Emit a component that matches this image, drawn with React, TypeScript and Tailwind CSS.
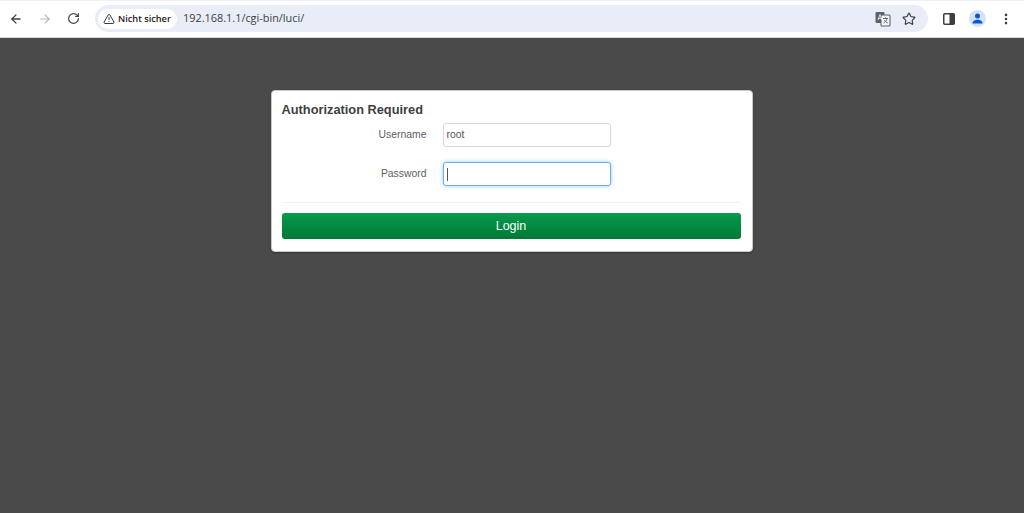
import { ArrowLeft, ArrowRight, RotateCw, TriangleAlert, Star, EllipsisVertical } from "lucide-react";

function Translate() {
  return (
    <svg width="16" height="16" viewBox="0 0 16 16">
      <rect x="0.500" y="1" width="9" height="11" rx="1" fill="#5f6368" />
      <rect x="6" y="4" width="9" height="11" rx="1" fill="#f4f5f8" stroke="#5f6368" strokeWidth="1.100" />
      <path d="M3 9l2-5.500 2 5.500M3.800 7.500h2.500" fill="none" stroke="#e9edf8" strokeWidth="0.900" />
      <path d="M8 7.500h5M10.500 6.500v1M12 7.500c-.4 2-1.700 3.500-3.500 4.500M9.300 9.300c.7 1.200 2 2.200 3.500 2.700" fill="none" stroke="#5f6368" strokeWidth="0.900" />
    </svg>
  );
}

function Panel() {
  return (
    <svg width="12" height="12" viewBox="0 0 12 12">
      <rect x="0.750" y="0.750" width="10.500" height="10.500" rx="1" fill="none" stroke="#3c4043" strokeWidth="1.500" />
      <rect x="6.500" y="0.750" width="4.750" height="10.500" fill="#3c4043" />
    </svg>
  );
}

function Avatar() {
  return (
    <div className="w-[17px] h-[17px] rounded-full bg-[#d3e3fd] flex items-center justify-center">
      <svg width="13" height="13" viewBox="0 0 13 13">
        <circle cx="6.500" cy="4" r="2.500" fill="#0b57d0" />
        <path d="M1.500 11.500c0-2.500 2.500-3.700 5-3.700s5 1.200 5 3.700z" fill="#0b57d0" />
      </svg>
    </div>
  );
}

export default function App() {
  return (
    <div className="w-[1024px] h-[513px] flex flex-col bg-[#4a4a4a] overflow-hidden font-['Liberation_Sans',Arial,sans-serif]">
      <div className="h-[38px] shrink-0 bg-white flex items-center pb-[1px] border-t border-t-[#edf1fa] border-b border-b-[#d8d8d8]">
        <div className="flex items-center pl-[9px] gap-[15px] w-[95px]">
          <ArrowLeft size={14} strokeWidth={2.200} color="#3c4043" />
          <ArrowRight size={14} strokeWidth={2} color="#b4b6b9" />
          <RotateCw size={13} strokeWidth={2.200} color="#3c4043" />
        </div>
        <div className="w-[833px] h-[27px] rounded-full bg-[#e9edf8] flex items-center pl-[3px] pr-[12px]">
          <div className="h-[20px] w-[79px] rounded-full bg-white flex items-center pl-[5px] gap-[3px]">
            <TriangleAlert size={12} strokeWidth={1.800} color="#202124" />
            <span className="font-['Open_Sans',sans-serif] text-[9.200px] font-semibold text-[#202124] whitespace-nowrap">Nicht sicher</span>
          </div>
          <span className="ml-[6px] font-['Open_Sans',sans-serif] text-[10.900px] text-[#3c4043]">192.168.1.1/cgi-bin/luci/</span>
          <div className="ml-auto flex items-center gap-[11px]">
            <Translate />
            <Star size={14} strokeWidth={2} color="#3c4043" />
          </div>
        </div>
        <div className="flex-1 flex items-center pl-[15px] gap-[14px]">
          <Panel />
          <Avatar />
          <EllipsisVertical size={14} strokeWidth={2.500} color="#3c4043" className="ml-[-1px]" />
        </div>
      </div>
      <div className="flex justify-center pt-[52px] pr-[1px]">
        <div className="w-[482px] h-[162px] bg-white rounded-[4px] border border-[#c8c8c8] pl-[10px] pr-[11px] pt-[11px] shadow-[0_1px_2px_rgba(0,0,0,0.3)]">
          <h1 className="text-[12.800px] leading-[16px] font-bold text-[#404040]">Authorization Required</h1>
          <div className="flex flex-col gap-[15px] mt-[5px]">
            <div className="flex items-center">
              <label className="w-[145px] text-right text-[10.400px] text-[#606060] pb-[1px]">Username</label>
              <div className="ml-[16px] w-[168px] h-[24px] rounded-[3px] border border-[#d8d8d8] bg-white flex items-center pl-[3px] pb-[1px] text-[10.400px] text-[#555555]">root</div>
            </div>
            <div className="flex items-center">
              <label className="w-[145px] text-right text-[10.400px] text-[#606060] pb-[1px]">Password</label>
              <div className="ml-[16px] w-[168px] h-[24px] rounded-[3px] border border-[#6fb0e8] bg-white flex items-center pl-[3px] shadow-[0_0_4px_rgba(82,168,236,0.6)]">
                <div className="w-px h-[13px] bg-[#555555]" />
              </div>
            </div>
          </div>
          <div className="h-px bg-[#f0f0f0] mt-[16px]" />
          <button className="w-full h-[26px] mt-[10px] rounded-[3px] bg-gradient-to-b from-[#049a4c] to-[#007a36] text-white text-[12.500px] flex items-center justify-center">Login</button>
        </div>
      </div>
    </div>
  );
}
